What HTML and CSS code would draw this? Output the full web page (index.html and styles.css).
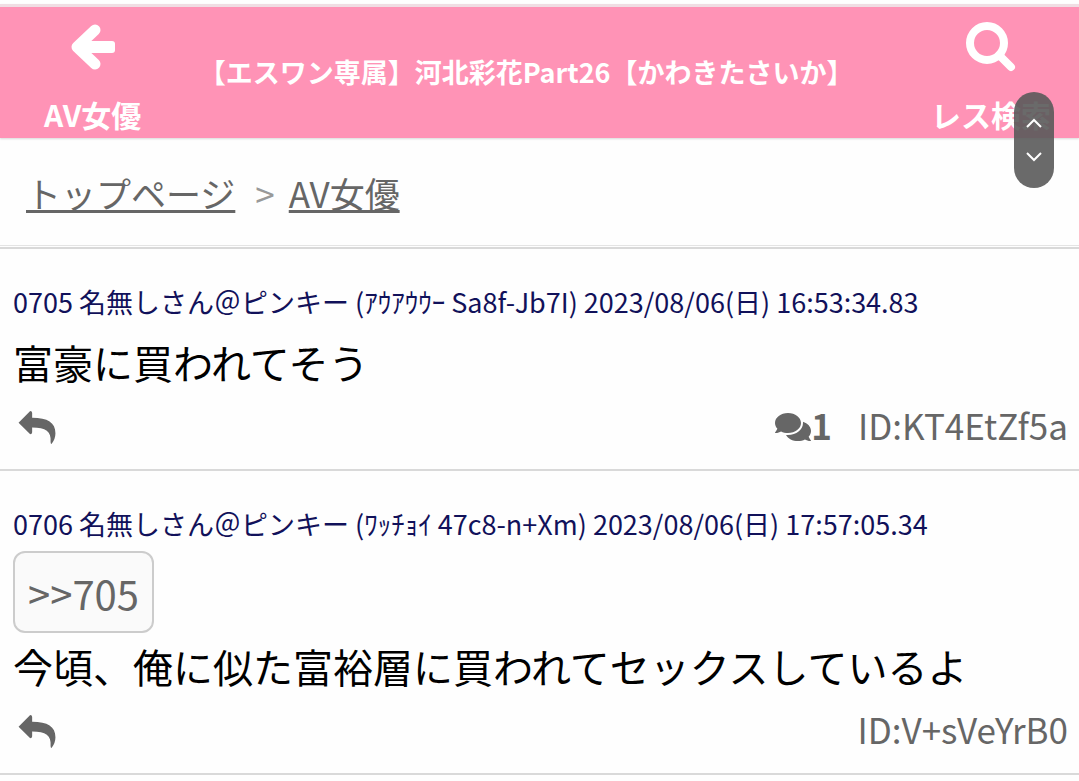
FILE: index.html
```html
<!DOCTYPE html>
<html lang="ja">
<head>
  <meta charset="UTF-8">
  <meta name="viewport" content="width=device-width, initial-scale=1">
  <title>【エスワン専属】河北彩花Part26【かわきたさいか】</title>
  <link rel="stylesheet" href="styles.css">
</head>
<body>
  <!-- Header -->
  <header class="header">
    <a class="nav" href="#">
      <svg class="nav-icon" viewBox="0 0 52 52" aria-hidden="true">
        <path d="M28 9L10 26L28 43" fill="none" stroke="currentColor" stroke-width="11" stroke-linecap="round" stroke-linejoin="round"/>
        <path d="M10 26L24 12V40z" fill="currentColor"/>
        <rect x="14" y="20" width="34" height="12" rx="3" fill="currentColor"/>
      </svg>
      <span>AV女優</span>
    </a>
    <h1 class="title">【エスワン専属】河北彩花Part26【かわきたさいか】</h1>
    <a class="nav" href="#">
      <svg class="nav-icon" viewBox="0 0 52 52" fill="none" stroke="currentColor" stroke-width="8" aria-hidden="true">
        <circle cx="22" cy="22" r="17"/>
        <path d="M34 34L46 46" stroke-linecap="round"/>
      </svg>
      <span>レス検索</span>
    </a>
  </header>

  <!-- Breadcrumb -->
  <nav class="breadcrumb">
    <a href="#">トップページ</a>
    <span class="sep">&gt;</span>
    <a href="#">AV女優</a>
  </nav>

  <!-- Posts -->
  <main class="posts">
    <article class="post">
      <div class="post-head">0705 名無しさん＠ピンキー (ｱｳｱｳｳｰ Sa8f-Jb7I) 2023/08/06(日) 16:53:34.83</div>
      <div class="post-body">富豪に買われてそう</div>
      <div class="post-foot">
        <button class="reply" type="button" aria-label="返信">
          <svg viewBox="0 0 38 34" aria-hidden="true"><path d="M0 12L12 0Q14 0 14 2V7C30 7 38 12 38 23Q38 29 34 34Q33 34 33 32C34 21 28 17 14 17V22Q14 24 12 24z"/></svg>
        </button>
        <a class="replies" href="#">
          <svg viewBox="0 32 576 448" aria-hidden="true"><path d="M416 192c0-88.4-93.1-160-208-160S0 103.6 0 192c0 34.3 14.1 65.9 38 92-13.4 30.2-35.5 54.2-35.8 54.5-2.2 2.3-2.8 5.7-1.5 8.7S4.8 352 8 352c36.6 0 66.9-12.3 88.7-25 32.2 15.7 70.3 25 111.3 25 114.9 0 208-71.6 208-160zm122 220c23.9-26 38-57.7 38-92 0-66.9-53.5-124.2-129.3-148.1.9 6.6 1.3 13.3 1.3 20.1 0 105.9-107.7 192-240 192-10.8 0-21.3-.8-31.7-1.9C207.8 439.6 281.8 480 368 480c41 0 79.1-9.2 111.3-25 21.8 12.7 52.1 25 88.7 25 3.2 0 6.1-1.9 7.3-4.8 1.3-2.9.7-6.3-1.5-8.7-.3-.2-22.4-24.2-35.8-54.5z"/></svg>1</a>
        <a class="uid" href="#">ID:KT4EtZf5a</a>
      </div>
    </article>

    <article class="post">
      <div class="post-head">0706 名無しさん＠ピンキー (ﾜｯﾁｮｲ 47c8-n+Xm) 2023/08/06(日) 17:57:05.34</div>
      <a class="anchor" href="#">&gt;&gt;705</a>
      <div class="post-body">今頃、俺に似た富裕層に買われてセックスしているよ</div>
      <div class="post-foot">
        <button class="reply" type="button" aria-label="返信">
          <svg viewBox="0 0 38 34" aria-hidden="true"><path d="M0 12L12 0Q14 0 14 2V7C30 7 38 12 38 23Q38 29 34 34Q33 34 33 32C34 21 28 17 14 17V22Q14 24 12 24z"/></svg>
        </button>
        <a class="uid" href="#">ID:V+sVeYrB0</a>
      </div>
    </article>
  </main>

  <!-- Floating scroll buttons -->
  <div class="scroller">
    <button type="button" aria-label="上へ">
      <svg viewBox="0 0 16 10" aria-hidden="true"><path d="M1 9L8 2L15 9"/></svg>
    </button>
    <button type="button" aria-label="下へ">
      <svg viewBox="0 0 16 10" aria-hidden="true"><path d="M1 1L8 8L15 1"/></svg>
    </button>
  </div>
</body>
</html>
```

FILE: styles.css
```css
* {
  box-sizing: border-box;
}
body {
  margin: 0;
  padding-top: 4px;
  background: #fefefe;
  color: #000;
  font-family: "Noto Sans CJK JP", sans-serif;
}
a {
  color: #666;
}
button {
  display: flex;
  align-items: center;
  justify-content: center;
  padding: 0;
  border: 0;
  background: none;
  color: inherit;
  cursor: pointer;
}

/* Header */
.header {
  display: flex;
  justify-content: space-between;
  align-items: center;
  padding: 14px 28px 4px 44px;
  border-top: 3px solid #f0dde3;
  background: #ff93b6;
  box-shadow: 0 1px 2px rgba(0, 0, 0, 0.15);
  color: #fff;
}
.nav {
  display: flex;
  flex-direction: column;
  align-items: center;
  color: #fff;
  font-size: 30px;
  font-weight: bold;
  line-height: 40px;
  text-decoration: none;
}
.nav-icon {
  width: 52px;
  height: 52px;
  margin-bottom: 21px;
}
.title {
  margin: 0;
  padding: 0 20px 12px 0;
  font-size: 27px;
  line-height: 40px;
}

/* Breadcrumb */
.breadcrumb {
  display: flex;
  align-items: center;
  padding: 26px 26px 23px;
  border-bottom: 1px solid #e4e4e4;
  font-size: 35px;
  line-height: 58px;
}
.breadcrumb a {
  text-underline-offset: 2px;
  text-decoration-thickness: 3px;
  text-decoration-skip-ink: none;
}
.sep {
  margin: 0 14px 0 20px;
  color: #999;
}

/* Posts */
.posts {
  margin-top: 1px;
  border-top: 2px solid #d9d9d9;
}
.post {
  padding: 33px 11px 14px 13px;
  border-bottom: 2px solid #d9d9d9;
}
.post-head {
  margin-bottom: 7px;
  color: #11115a;
  font-size: 27px;
  line-height: 40px;
}
.post-body {
  font-size: 40px;
  line-height: 66px;
}
.anchor {
  display: inline-block;
  padding: 9px 13px 7px;
  border: 2px solid #ccc;
  border-radius: 12px;
  background: #fafafa;
  font-size: 40px;
  line-height: 62px;
  text-decoration: none;
  vertical-align: top;
}
.post-foot {
  display: flex;
  align-items: center;
  font-size: 35px;
  line-height: 60px;
}
.post-foot a {
  text-decoration: none;
}
.post-foot svg {
  margin-top: 4px;
  fill: #666;
}
.reply {
  margin: 0 auto 0 5px;
}
.reply svg {
  width: 38px;
  height: 33px;
}
.replies {
  display: flex;
  align-items: center;
  margin-right: 26px;
  font-weight: bold;
}
.replies svg {
  width: 36px;
  height: 28px;
}

/* Scroll buttons, over the page */
.scroller {
  position: fixed;
  top: 92px;
  right: 25px;
  display: flex;
  flex-direction: column;
  padding: 14px 0;
  border-radius: 20px;
  background: rgba(90, 90, 90, 0.9);
  color: #fff;
}
.scroller button {
  width: 40px;
  height: 34px;
}
.scroller svg {
  width: 16px;
  height: 10px;
  fill: none;
  stroke: currentColor;
  stroke-width: 2;
}
```
